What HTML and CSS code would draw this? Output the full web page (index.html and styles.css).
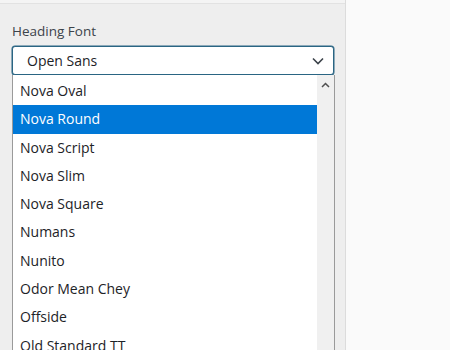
FILE: index.html
```html
<!DOCTYPE html>
<html lang="en">
<head>
    <meta charset="UTF-8">
    <meta name="viewport" content="width=device-width, initial-scale=1.0">
    <title>Heading Font</title>
    <link rel="stylesheet" href="styles.css">
</head>

<body>
  <div id="panel">
    <div class="topline"></div>
    <div class="field">
      <label class="field_label">Heading Font</label>
      <div class="select">
        <span>Open Sans</span>
        <svg class="chevron" width="12" height="8" viewBox="0 0 12 8"><path d="M1 1.5l5 5 5-5" fill="none" stroke="#3c434a" stroke-width="1.6"/></svg>
      </div>

      <div class="dropdown">
        <ul class="options">
          <li>Nova Oval</li>
          <li class="active">Nova Round</li>
          <li>Nova Script</li>
          <li>Nova Slim</li>
          <li>Nova Square</li>
          <li>Numans</li>
          <li>Nunito</li>
          <li>Odor Mean Chey</li>
          <li>Offside</li>
          <li>Old Standard TT</li>
        </ul>
        <div class="scrollbar">
          <svg width="9" height="6" viewBox="0 0 9 6"><path d="M1 5l3.5-3.5L8 5" fill="none" stroke="#505050" stroke-width="1.5"/></svg>
        </div>
      </div>
    </div>
  </div>
  <div id="preview"></div>
</body>
</html>
```

FILE: styles.css
```css
body { margin: 0; display: flex; height: 350px; overflow: hidden; background: #fafafa; font-family: "Open Sans", "Noto Sans", sans-serif; color: #1d2327; }

#panel { width: 345px; background: #eeeeee; border-right: 1px solid #dcdcdc; }
#preview { flex-grow: 1; }

.topline { height: 3px; background: #f4f4f4; border-bottom: 1px solid #e2e2e2; }

.field { position: relative; padding: 17px 11px 0 12px; }
.field_label { display: block; font-size: 13.5px; font-weight: 500; line-height: 20px; color: #3c434a; }

.select { margin-top: 5px; height: 29px; box-sizing: border-box; display: flex; align-items: center; justify-content: space-between; padding: 0 9px 0 14px; background: #fff; border: 1px solid #2a6583; border-radius: 3px; box-shadow: 0 0 0 0.5px #2a6583; font-size: 14px; }
.chevron { margin-top: 1px; }

.dropdown { position: absolute; top: 71px; left: 12px; width: 321px; height: 290px; display: flex; background: #fff; border-left: 1px solid #9a9a9a; border-right: 1px solid #9a9a9a; }
.options { list-style-type: none; margin: 0; padding: 2px 0 0; flex-grow: 1; }
.options > li { height: 28.3px; line-height: 27.5px; padding-left: 7px; font-size: 14px; color: #1d2327; }
.options > li.active { background: #0078d7; color: #fff; }
.scrollbar { width: 17px; background: #f0f0f0; display: flex; justify-content: center; padding-top: 7px; box-sizing: border-box; }
```
